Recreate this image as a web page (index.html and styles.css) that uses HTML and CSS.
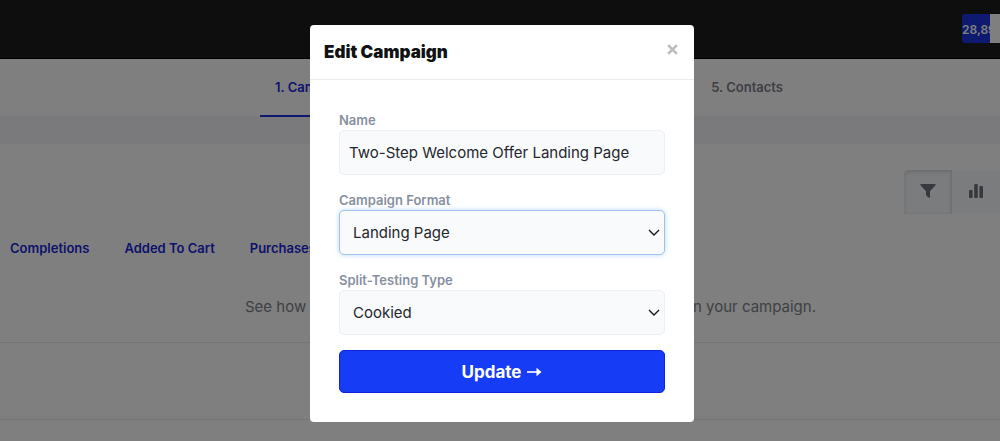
FILE: index.html
```html
<!DOCTYPE html>
<html lang="en">
<head>
<meta charset="utf-8">
<meta name="viewport" content="width=device-width, initial-scale=1">
<title>Edit Campaign</title>
<link rel="stylesheet" href="styles.css">
</head>
<body>
<header class="topbar">
  <div class="counter"><span class="counter-value">28,89</span><span class="counter-rest"></span></div>
</header>
<nav class="steps">
  <a class="step step-active" href="#campaign">1. Campaign</a>
  <a class="step" href="#contacts">5. Contacts</a>
</nav>
<main class="content">
  <div class="toolbar">
    <button class="tool tool-active" type="button" aria-label="Filter">
      <svg width="16" height="14" viewBox="0 0 16 14"><path d="M1 0h14q1.300 0 .5 1.200L10 7.300v5.900q-.2 1-1 .5L6.400 11.700Q6 11.400 6 10.800V7.300L.5 1.200Q-.3 0 1 0z"/></svg>
    </button>
    <button class="tool" type="button" aria-label="Statistics">
      <svg width="14" height="14" viewBox="0 0 14 14"><rect x="0" y="6" width="3.600" height="8" rx="1"/><rect x="5.200" y="0" width="3.600" height="14" rx="1"/><rect x="10.400" y="2" width="3.600" height="12" rx="1"/></svg>
    </button>
  </div>
  <div class="metrics">
    <a href="#completions">Completions</a>
    <a href="#cart">Added To Cart</a>
    <a href="#purchases">Purchases</a>
  </div>
  <p class="hint"><span>See how</span><span>in your campaign.</span></p>
  <div class="row"></div>
  <div class="rule"></div>
</main>
<div class="overlay">
  <section class="modal" role="dialog" aria-modal="true" aria-labelledby="modal-title">
    <div class="modal-head">
      <h1 class="modal-title" id="modal-title">Edit Campaign</h1>
      <button class="close" type="button" aria-label="Close">
        <svg width="11" height="11" viewBox="0 0 10 10"><path d="M1 1l8 8M9 1L1 9"/></svg>
      </button>
    </div>
    <form class="modal-body">
      <div class="field">
        <label for="name">Name</label>
        <input class="control" id="name" type="text" value="Two-Step Welcome Offer Landing Page">
      </div>
      <div class="field">
        <label for="format">Campaign Format</label>
        <div class="select">
          <select class="control control-focus" id="format"><option>Landing Page</option></select>
          <svg class="chevron" width="12" height="8" viewBox="0 0 12 8"><path d="M1 1l5 5 5-5"/></svg>
        </div>
      </div>
      <div class="field">
        <label for="split">Split-Testing Type</label>
        <div class="select">
          <select class="control" id="split"><option>Cookied</option></select>
          <svg class="chevron" width="12" height="8" viewBox="0 0 12 8"><path d="M1 1l5 5 5-5"/></svg>
        </div>
      </div>
      <button class="submit" type="button">Update
        <svg width="15" height="10" viewBox="0 0 15 10"><path class="shaft" d="M0 5h11"/><path d="M9.500 .7L14.500 5 9.500 9.300z"/></svg>
      </button>
    </form>
  </section>
</div>
</body>
</html>
```
FILE: styles.css
```css
* { box-sizing: border-box; }
body {
  margin: 0;
  min-height: 100vh;
  background: #fff;
  font-family: Inter, "Liberation Sans", sans-serif;
}
button, input, select { font: inherit; }
a { text-decoration: none; }

.topbar {
  height: 59px;
  background: #1c1c1c;
  border-bottom: 1px solid #000;
  display: flex;
  justify-content: flex-end;
  align-items: flex-start;
  padding-top: 14px;
}
.counter { display: flex; height: 29px; }
.counter-value {
  width: 28px;
  overflow: hidden;
  background: #1a34e0;
  color: #fff;
  font-size: 12px;
  font-weight: 600;
  line-height: 31px;
  border-radius: 3px 0 0 3px;
}
.counter-rest { width: 10px; background: #fff; }

.steps {
  display: flex;
  justify-content: space-between;
  padding: 0 202px 0 260px;
  height: 57px;
}
.step {
  height: 58px;
  padding: 0 15px;
  font-size: 13px;
  font-weight: 600;
  line-height: 56px;
  color: #7a7f88;
}
.step-active { color: #1a26d8; border-bottom: 2px solid #1a34e0; }

.content { border-top: 28px solid #f5f5fa; }
.toolbar { display: flex; justify-content: flex-end; padding-top: 26px; }
.tool {
  width: 48px;
  height: 44px;
  padding: 0 0 2px;
  display: flex;
  align-items: center;
  justify-content: center;
  border: 0;
  background: #f5f8fa;
  fill: #6c757d;
}
.tool-active {
  border-radius: 5px 0 0 0;
  box-shadow: inset 0 2px 4px #d4d8dc, inset -1px 0 2px #dce0e4;
}
.metrics { display: flex; gap: 35px; padding: 24px 10px 0; }
.metrics a { font-size: 13px; font-weight: 600; line-height: 20px; color: #1a26d8; }
.hint {
  display: flex;
  justify-content: space-between;
  margin: 0 0 23px;
  padding: 37px 184px 0 245px;
  font-size: 15px;
  line-height: 24px;
  color: #7c8288;
}
.row { border-top: 1px solid #e6e7e9; height: 77px; }
.rule { border-top: 1px solid #e6e7e9; }

.overlay {
  position: fixed;
  inset: 0;
  display: flex;
  justify-content: center;
  align-items: flex-start;
  padding: 25px 0 0 4px;
  background: rgba(0, 0, 0, .5);
}
.modal {
  width: 384px;
  background: #fff;
  border-radius: 4px;
}
.modal-head {
  display: flex;
  align-items: center;
  justify-content: space-between;
  height: 55px;
  padding: 0 16px 0 14px;
  border-bottom: 1px solid #e9ebee;
}
.modal-title { margin: 0; font-size: 17px; font-weight: 900; line-height: 24px; color: #101214; }
.close { display: flex; padding: 0; border: 0; background: none; align-self: flex-start; margin-top: 19px; }
.close path { stroke: #bdbdbd; stroke-width: 2.400; fill: none; }
.modal-body {
  display: flex;
  flex-direction: column;
  gap: 15px;
  padding: 30px 29px 29px;
}
.field { display: flex; flex-direction: column; }
.field label { font-size: 13px; font-weight: 600; line-height: 20px; color: #8790a0; }
.control {
  display: block;
  width: 100%;
  height: 45px;
  margin: 0;
  padding: 0 9px;
  border: 1px solid #eceff3;
  border-radius: 5px;
  background: #f9fafc;
  color: #24272b;
  font-size: 15px;
  outline: none;
}
.select { position: relative; }
select.control { appearance: none; padding: 0 28px 0 13px; }
.control-focus { border-color: #a3c1ee; box-shadow: 0 0 5px #b8d8fa; }
.chevron {
  position: absolute;
  right: 5px;
  top: 19px;
  fill: none;
  stroke: #16181b;
  stroke-width: 1.400;
  pointer-events: none;
}
.submit {
  display: flex;
  align-items: center;
  justify-content: center;
  gap: 6px;
  height: 43px;
  border: 1px solid #0f22dc;
  border-radius: 5px;
  background: #173cf5;
  color: #fff;
  font-size: 17px;
  font-weight: 700;
}
.submit svg { fill: #fff; }
.shaft { stroke: #fff; stroke-width: 1.600; }
```
